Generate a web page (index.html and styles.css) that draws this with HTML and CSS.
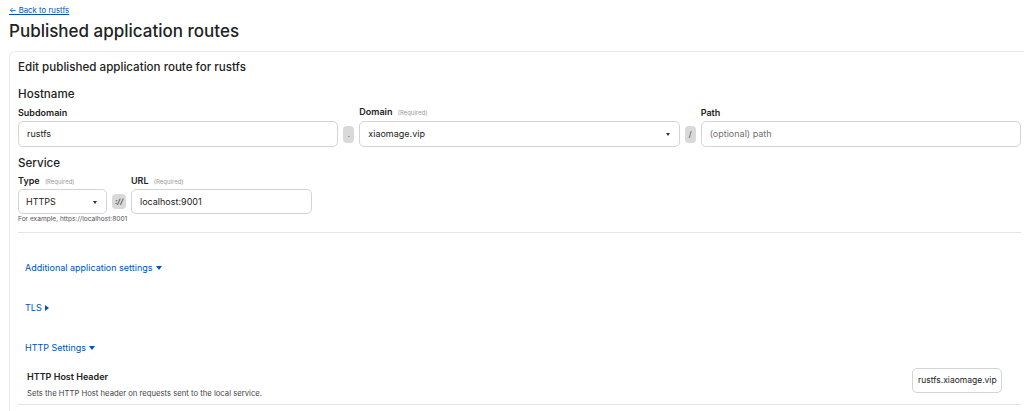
FILE: index.html
```html
<!DOCTYPE html>
<html lang="en">
<head>
<meta charset="utf-8">
<title>Published application routes</title>
<link rel="stylesheet" href="styles.css">
</head>
<body>
<div class="page">
  <a class="back" href="#">← Back to rustfs</a>
  <h1 class="page-title">Published application routes</h1>
  <div class="card">
    <h2 class="card-title">Edit published application route for rustfs</h2>

    <h3 class="section-title">Hostname</h3>
    <div class="host-grid">
      <label class="field-label">Subdomain</label>
      <span></span>
      <label class="field-label">Domain <span class="req">(Required)</span></label>
      <span></span>
      <label class="field-label">Path</label>

      <div class="input">rustfs</div>
      <span class="sep">.</span>
      <div class="input select">xiaomage.vip<span class="caret"></span></div>
      <span class="sep">/</span>
      <div class="input placeholder">(optional) path</div>
    </div>

    <h3 class="section-title service">Service</h3>
    <div class="service-grid">
      <label class="field-label">Type <span class="req">(Required)</span></label>
      <span></span>
      <label class="field-label">URL <span class="req">(Required)</span></label>

      <div class="input select type">HTTPS<span class="caret"></span></div>
      <span class="sep proto">://</span>
      <div class="input url">localhost:9001</div>
    </div>
    <p class="help">For example, https://localhost:8001</p>

    <div class="divider"></div>

    <div class="toggles">
      <a class="toggle" href="#">Additional application settings <span class="tri-down"></span></a>
      <a class="toggle" href="#">TLS <span class="tri-right"></span></a>
      <a class="toggle" href="#">HTTP Settings <span class="tri-down"></span></a>
    </div>

    <div class="setting-row">
      <div class="setting-text">
        <div class="setting-name">HTTP Host Header</div>
        <div class="setting-desc">Sets the HTTP Host header on requests sent to the local service.</div>
      </div>
      <div class="input host">rustfs.xiaomage.vip</div>
    </div>
    <div class="divider bottom"></div>
  </div>
</div>
</body>
</html>
```

FILE: styles.css
```css
html, body {
  margin: 0;
  padding: 0;
  overflow: hidden;
  background: #ffffff;
}
body {
  font-family: Inter, "Liberation Sans", sans-serif;
  color: #222222;
}
.page {
  padding: 4px 0 0 9px;
}
.back {
  display: block;
  font-size: 7.8px;
  line-height: 12px;
  color: #0051c3;
  text-decoration: underline;
}
.page-title {
  margin: 3px 0 8px;
  font-size: 17px;
  line-height: 24px;
  font-weight: 500;
  color: #222;
}
.card {
  border: 1px solid #e8e8e8;
  border-bottom: none;
  border-radius: 6px 6px 0 0;
  padding: 7px 8px 0 8px;
  margin-right: -6px;
  height: 352px;
}
.card-title {
  margin: 0;
  font-size: 11.6px;
  line-height: 16px;
  font-weight: 500;
}
.section-title {
  margin: 11px 0 0;
  font-size: 11.6px;
  line-height: 16px;
  font-weight: 500;
}
.section-title.service {
  margin-top: 8px;
}
.host-grid {
  display: grid;
  grid-template-columns: 1fr auto 1fr auto 1fr;
  column-gap: 5px;
  row-gap: 2px;
  align-items: center;
  margin-top: 4px;
}
.service-grid {
  display: grid;
  grid-template-columns: 89px auto 181px;
  justify-content: start;
  column-gap: 5px;
  row-gap: 1px;
  align-items: center;
  margin-top: 4px;
}
.field-label {
  font-size: 9px;
  line-height: 12px;
  font-weight: 600;
  color: #222;
}
.req {
  font-size: 6px;
  font-weight: 400;
  color: #9a9a9a;
  margin-left: 3px;
}
.input {
  position: relative;
  box-sizing: border-box;
  height: 26px;
  border: 1px solid #d4d4d4;
  border-radius: 5px;
  padding: 0 8px;
  font-size: 9px;
  line-height: 24px;
  color: #222;
  background: #fff;
}
.input.placeholder {
  color: #6f6f6f;
}
.service-grid .input {
  height: 25px;
  line-height: 23px;
}
.input.type {
  padding-left: 7px;
}
.caret {
  position: absolute;
  right: 9px;
  top: 11px;
  width: 0;
  height: 0;
  border-left: 2.5px solid transparent;
  border-right: 2.5px solid transparent;
  border-top: 3px solid #333;
}
.sep {
  display: flex;
  align-items: center;
  justify-content: center;
  box-sizing: border-box;
  width: 11px;
  height: 17px;
  border-radius: 4px;
  background: #d9d9d9;
  font-size: 8px;
  color: #444;
}
.sep.proto {
  width: 14px;
  height: 15px;
  font-size: 7.5px;
  font-style: italic;
  font-weight: 600;
}
.help {
  margin: 0;
  font-size: 6.6px;
  line-height: 10px;
  color: #555;
}
.divider {
  height: 1px;
  background: #e4e4e4;
  margin-top: 8px;
}
.toggles {
  display: flex;
  flex-direction: column;
  align-items: flex-start;
  gap: 27px;
  padding: 28px 0 0 7px;
}
.toggle {
  font-size: 9px;
  line-height: 13px;
  color: #0051c3;
  text-decoration: none;
  display: inline-flex;
  align-items: center;
  gap: 3px;
}
.tri-down {
  width: 0;
  height: 0;
  border-left: 3px solid transparent;
  border-right: 3px solid transparent;
  border-top: 4px solid #0051c3;
}
.tri-right {
  width: 0;
  height: 0;
  border-top: 3px solid transparent;
  border-bottom: 3px solid transparent;
  border-left: 4px solid #0051c3;
}
.setting-row {
  display: flex;
  align-items: flex-start;
  justify-content: space-between;
  padding: 14px 19px 0 9px;
}
.setting-text {
  padding-top: 3px;
}
.setting-name {
  font-size: 9px;
  line-height: 12px;
  font-weight: 600;
  color: #222;
}
.setting-desc {
  margin-top: 6px;
  font-size: 7.7px;
  line-height: 10px;
  color: #444;
}
.input.host {
  width: 90px;
  height: 25px;
  line-height: 23px;
  padding: 0 5px;
  font-size: 8.5px;
}
.divider.bottom {
  margin-top: 5px;
}
```
